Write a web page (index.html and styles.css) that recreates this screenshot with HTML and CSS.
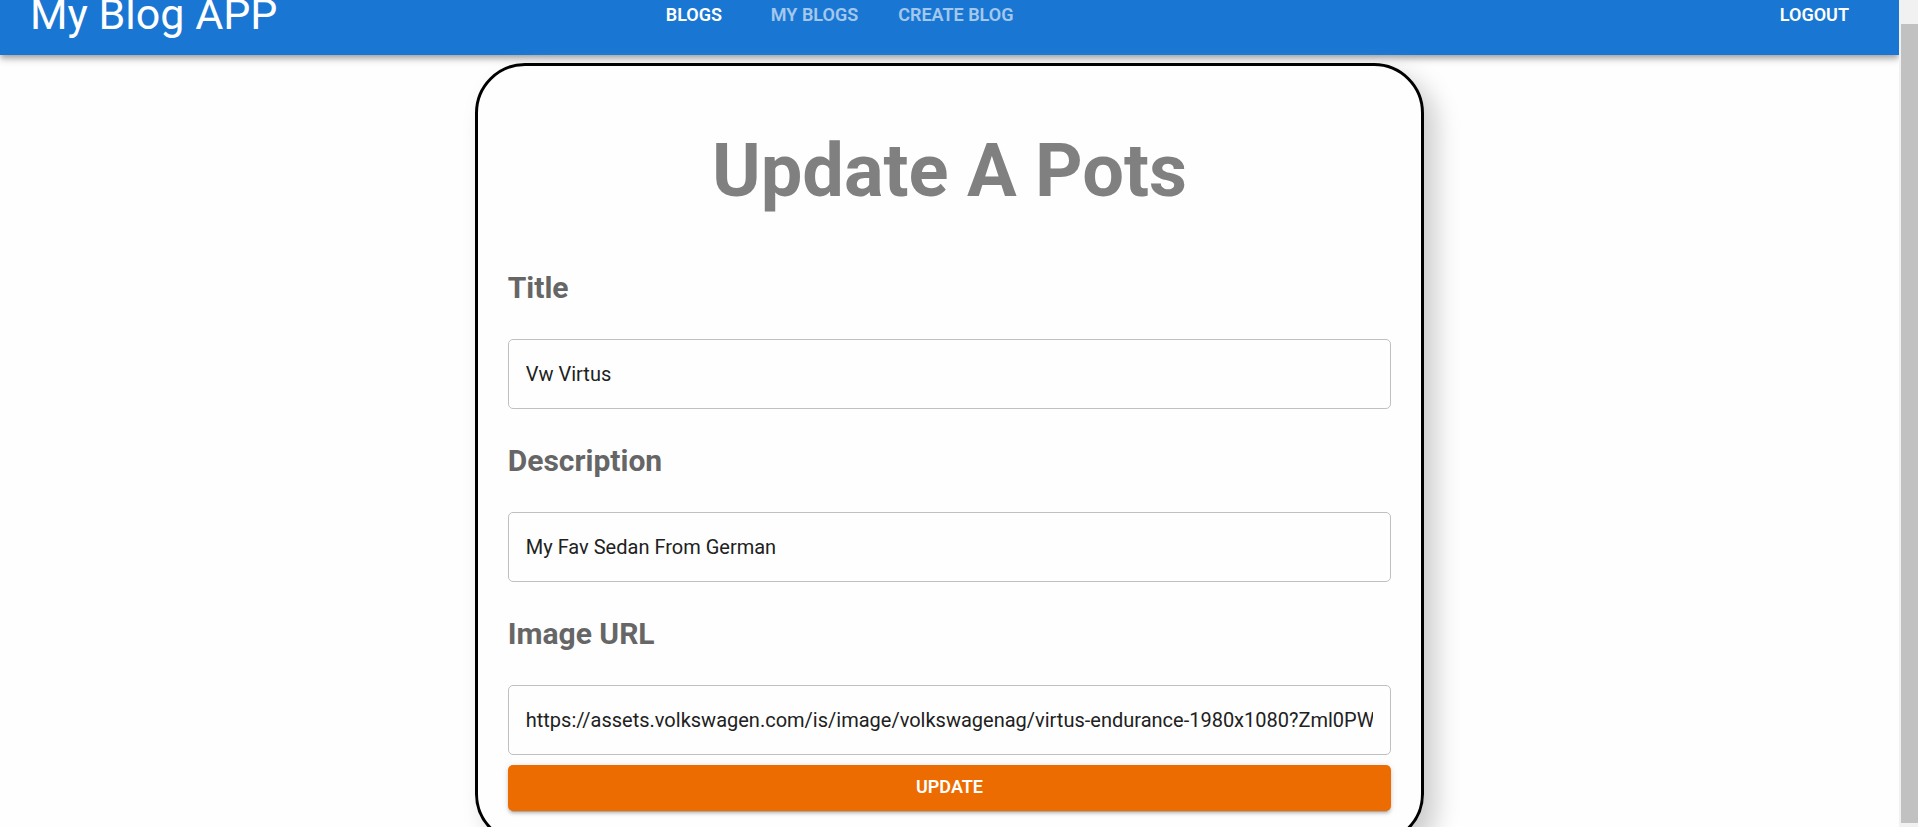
FILE: index.html
```html
<!DOCTYPE html>
<html lang="en">
<head>
<meta charset="utf-8">
<title>My Blog APP</title>
<link rel="stylesheet" href="styles.css">
</head>
<body>
<div class="window">
  <div class="page">
    <header class="toolbar">
      <div class="brand">My Blog APP</div>
      <nav class="tabs">
        <a class="tab tab-active" href="#blogs">BLOGS</a>
        <a class="tab" href="#my-blogs">MY BLOGS</a>
        <a class="tab" href="#create">CREATE BLOG</a>
      </nav>
      <button class="logout" type="button">LOGOUT</button>
    </header>
    <main class="content">
      <form class="card">
        <h1 class="heading">Update A Pots</h1>
        <label class="label" for="title">Title</label>
        <input class="field" id="title" type="text" value="Vw Virtus">
        <label class="label" for="description">Description</label>
        <input class="field" id="description" type="text" value="My Fav Sedan From German">
        <label class="label" for="image">Image URL</label>
        <input class="field" id="image" type="text" value="https://assets.volkswagen.com/is/image/volkswagenag/virtus-endurance-1980x1080?Zml0PWNyb3AsMQ">
        <button class="submit" type="button">UPDATE</button>
      </form>
    </main>
  </div>
  <div class="scroll-track"><div class="scroll-thumb"></div></div>
</div>
</body>
</html>
```
FILE: styles.css
```css
* {
  box-sizing: border-box;
}

body {
  margin: 0;
  background: #fefefe;
  font-family: Roboto, "Liberation Sans", sans-serif;
}

.window {
  display: flex;
  height: 100vh;
  overflow: hidden;
}

.page {
  flex: 1;
  min-width: 0;
  overflow: hidden;
}

/* The page is scrolled, so the top of the bar is out of view. */
.toolbar {
  display: grid;
  grid-template-columns: 33% 1fr auto;
  align-items: center;
  height: 80px;
  margin-top: -25px;
  padding: 0 30px;
  background: #1976d2;
  color: #fff;
  box-shadow: 0 3px 5px -1px rgba(0, 0, 0, 0.2), 0 5px 6px rgba(0, 0, 0, 0.14), 0 1px 12px rgba(0, 0, 0, 0.12);
}

.brand {
  padding-bottom: 2px;
  font-size: 43px;
  line-height: 52px;
  white-space: nowrap;
}

.tabs {
  display: flex;
}

.tab {
  min-width: 114px;
  padding: 0 20px;
  color: #fff;
  font-size: 18px;
  font-weight: 600;
  line-height: 22px;
  text-align: center;
  text-decoration: none;
  white-space: nowrap;
  opacity: 0.6;
}

.tab-active {
  opacity: 1;
}

.logout {
  padding: 8px 20px;
  border: 0;
  background: none;
  color: #fff;
  font: 600 18px/30px Roboto, "Liberation Sans", sans-serif;
}

.content {
  padding-top: 8px;
}

.card {
  display: flex;
  flex-direction: column;
  width: 50%;
  margin: 0 auto;
  padding: 30px;
  border: 3px solid #000;
  border-radius: 50px;
  box-shadow: 12px 12px 25px #ccc;
}

.heading {
  margin: 0 0 20px;
  padding: 30px;
  color: #808080;
  font-size: 74px;
  font-weight: 700;
  line-height: 90px;
  text-align: center;
}

.label {
  margin: 30px 0;
  color: #666;
  font-size: 30px;
  font-weight: 700;
  line-height: 43px;
}

.heading + .label {
  margin-top: 0;
}

.field {
  width: 100%;
  height: 70px;
  padding: 0 17px;
  border: 1px solid #c0c0c0;
  border-radius: 5px;
  background: transparent;
  color: #212121;
  font: 400 20px/29px Roboto, "Liberation Sans", sans-serif;
}

.submit {
  height: 46px;
  margin-top: 10px;
  padding-bottom: 3px;
  border: 0;
  border-radius: 5px;
  background: #ed6c02;
  color: #fff;
  font: 600 18px/30px Roboto, "Liberation Sans", sans-serif;
  box-shadow: 0 4px 1px -3px rgba(0, 0, 0, 0.2), 0 3px 3px rgba(0, 0, 0, 0.14), 0 1px 6px rgba(0, 0, 0, 0.12);
}

.scroll-track {
  width: 19px;
  padding: 24px 0 4px 2px;
  background: #f1f1f1;
}

.scroll-thumb {
  height: 100%;
  background: #c1c1c1;
}
```
